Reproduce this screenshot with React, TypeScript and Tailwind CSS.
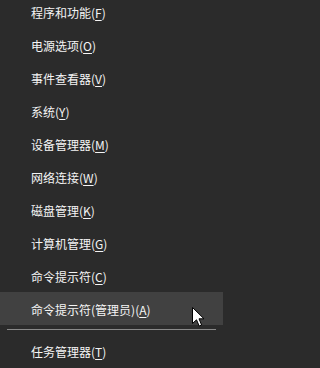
const items: { label: string; key: string }[] = [
  { label: "程序和功能", key: "F" },
  { label: "电源选项", key: "O" },
  { label: "事件查看器", key: "V" },
  { label: "系统", key: "Y" },
  { label: "设备管理器", key: "M" },
  { label: "网络连接", key: "W" },
  { label: "磁盘管理", key: "K" },
  { label: "计算机管理", key: "G" },
  { label: "命令提示符", key: "C" },
  { label: "命令提示符(管理员)", key: "A" },
];

function Row({ label, keyChar, active }: { label: string; keyChar: string; active?: boolean }) {
  return (
    <div
      className={`h-[33px] flex items-center pl-[31px] pt-[3px] text-[12px] text-[#f4f4f4] ${
        active ? "bg-[#414141]" : ""
      }`}
    >
      <span>
        {label}(<span className="underline underline-offset-2">{keyChar}</span>)
      </span>
    </div>
  );
}

export default function App() {
  return (
    <div
      className="relative w-full min-w-[223px] h-[368px] overflow-hidden bg-[#2b2b2b]"
      style={{ fontFamily: '"Noto Sans CJK SC", "Noto Sans", sans-serif' }}
    >
      {/* 菜单列表，截图从菜单中间开始 */}
      <div className="w-[223px] -mt-[5px] flex flex-col">
        {items.map((it, i) => (
          <Row key={it.key} label={it.label} keyChar={it.key} active={i === items.length - 1} />
        ))}
        <div className="my-[4px] mx-[7px] h-px bg-[#8a8a8a]" />
        <Row label="任务管理器" keyChar="T" />
      </div>

      {/* 鼠标指针 */}
      <svg className="absolute left-[192px] top-[307px]" width="13" height="20" viewBox="0 0 13 20">
        <path
          d="M0.5 0.5 L0.5 16.5 L4.5 12.8 L7.2 19 L9.6 18 L7 11.8 L12 11.8 Z"
          fill="#fff"
          stroke="#000"
          strokeWidth="1"
          strokeLinejoin="miter"
        />
      </svg>
    </div>
  );
}
